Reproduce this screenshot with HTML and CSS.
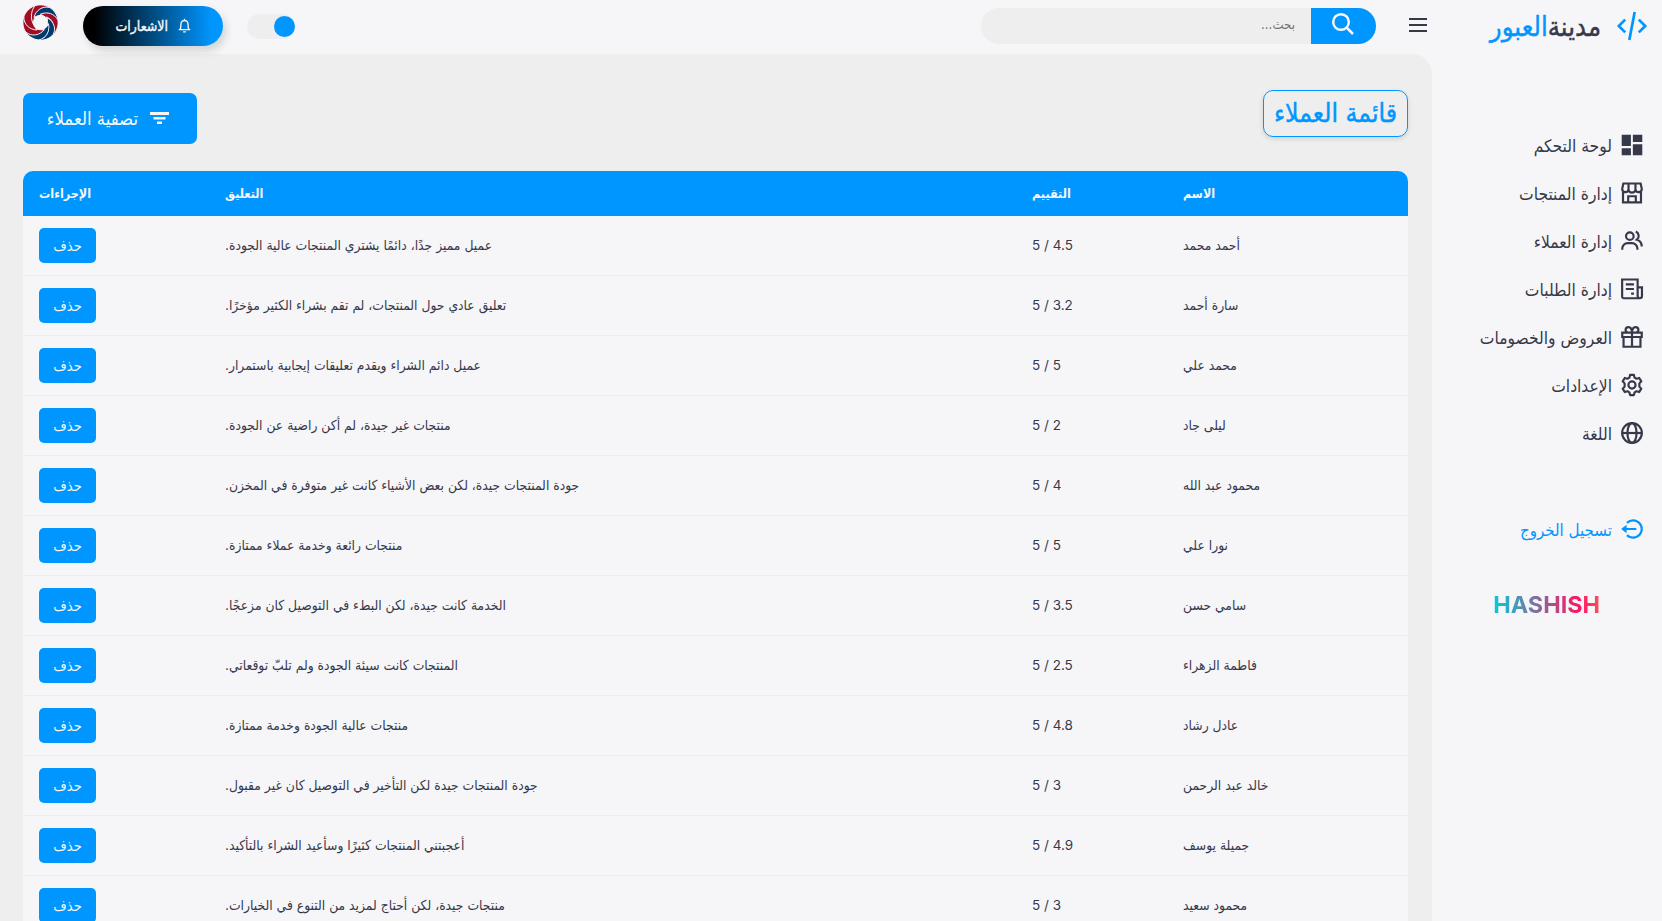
FILE: index.html
```
<!DOCTYPE html>
<html lang="ar" dir="rtl">
<head>
<meta charset="utf-8">
<title>قائمة العملاء</title>
<link rel="stylesheet" href="styles.css">
</head>
<body>
<aside class="sidebar">
  <div class="logo">
    <svg class="logo-icon" viewBox="0 0 24 24"><path d="M7.200 7.500 2.700 12l4.500 4.500M16.800 7.500l4.500 4.500-4.500 4.500M13.900 2.200l-3.800 19.600"/></svg>
    <div class="logo-name"><span>مدينة</span><span class="accent">العبور</span></div>
  </div>
  <nav class="menu">
    <a><svg class="solid" viewBox="0 0 24 24"><path d="M2.500 2.500h8.500V13h-8.500zM12.800 2.500H21.500v6.800h-8.700zM2.500 15h8.500v6.500h-8.500zM12.800 11.300H21.500V21.500h-8.700z"/></svg><span>لوحة التحكم</span></a>
    <a><svg viewBox="0 0 24 24"><path d="M3.700 11v9.700h16.600V11M8.500 20.500v-5.500h7v5.500M4 3.200h16l1 4.800a2.900 2.900 0 0 1-5.700 1 3.400 3.400 0 0 1-6.600 0A2.900 2.900 0 0 1 3 8zM8.800 3.200V9M15.200 3.200V9"/></svg><span>إدارة المنتجات</span></a>
    <a><svg viewBox="0 0 24 24"><circle cx="10" cy="7.500" r="3.500"/><path d="M3 20v-1a5 5 0 0 1 5-5h4a5 5 0 0 1 5 5v1M15.500 3.300a4.400 4.400 0 0 1 1 7.500c2.700.8 4.500 2.700 4.500 6.200"/></svg><span>إدارة العملاء</span></a>
    <a><svg viewBox="0 0 24 24"><path d="M19.300 20.500H4.200a1.300 1.300 0 0 1-1.300-1.300V3.200h14.300v15.300a2 2 0 0 0 2 2 2 2 0 0 0 2-2V10.500h-4M6.300 7.800h7.500M6.300 12h7.500M11.200 16.200h2.600"/></svg><span>إدارة الطلبات</span></a>
    <a><svg viewBox="0 0 24 24"><path d="M3 8h18v4H3zM4.200 12v9h15.600v-9M12 8v13M12 8H8.500C5 7.500 5.500 2.800 8.700 2.900 11 3 12 5.500 12 8c0-2.500 1-5 3.300-5.100 3.200-.1 3.700 4.600.2 5.100z"/></svg><span>العروض والخصومات</span></a>
    <a><svg viewBox="0 0 24 24"><circle cx="12" cy="12" r="3.300"/><path stroke-linejoin="round" d="M10.200 2.700h3.600l.6 2.500 1.800 1 2.500-.7 1.900 3.100-1.800 1.900v3l1.800 1.900-1.900 3.100-2.500-.7-1.800 1-.6 2.500h-3.600l-.6-2.500-1.800-1-2.500.7-1.900-3.100 1.800-1.900v-3L3.400 8.600l1.900-3.100 2.500.7 1.800-1z"/></svg><span>الإعدادات</span></a>
    <a><svg viewBox="0 0 24 24"><circle cx="12" cy="12" r="9.100"/><ellipse cx="12" cy="12" rx="4.200" ry="9.100"/><path d="M3 12h18"/></svg><span>اللغة</span></a>
  </nav>
  <a class="logout"><svg class="solid" viewBox="0 0 24 24"><path d="m2 12 5 4v-3h9v-2H7V8z"/><path d="M13 3a9 9 0 0 0-6.364 2.636L8.050 7.050A7 7 0 1 1 8.050 16.950l-1.414 1.414A9 9 0 1 0 13 3z"/></svg><span>تسجيل الخروج</span></a>
  <div class="brand">HASHISH</div>
</aside>

<div class="content">
  <header class="topbar">
    <svg class="burger" viewBox="0 0 18 14"><path d="M0 1h18M0 7h18M0 13h18"/></svg>
    <form class="search">
      <button type="button"><svg viewBox="0 0 24 24"><circle cx="10" cy="10" r="7.800"/><path d="m15.500 15.500 6.500 6.500"/></svg></button>
      <div class="field"><span>بحث...</span></div>
    </form>
    <div class="toggle"><i></i></div>
    <a class="notify"><svg viewBox="0 0 24 24"><path d="M2.800 18.500h18.400M5 18.500c1.200-2 1.300-4 1.300-8.500a5.700 6 0 0 1 11.400 0c0 4.500.1 6.500 1.300 8.500M9.800 22.200h4.400M12 1v3"/></svg><span>الاشعارات</span></a>
    <svg class="swirl" viewBox="-17.500 -17.500 35 35">
      <defs><path id="blade" d="M-8 2C-12.500-4-12-12-6-16.500-2-18.200 4-18.200 10-14.800 2-15-6-9-8 2z"/></defs>
      <use class="red" href="#blade"/>
      <use class="navy" href="#blade" transform="rotate(51.400)"/>
      <use class="red" href="#blade" transform="rotate(102.900)"/>
      <use class="navy" href="#blade" transform="rotate(154.300)"/>
      <use class="navy" href="#blade" transform="rotate(205.700)"/>
      <use class="red" href="#blade" transform="rotate(257.100)"/>
      <use class="red" href="#blade" transform="rotate(308.600)"/>
    </svg>
  </header>

  <main>
    <div class="heading">
      <h1>قائمة العملاء</h1>
      <a class="filter"><svg viewBox="0 0 19 12"><path d="M0 0h19v3H0zM3.500 5h12v2.500h-12zM7 9.500h5V12H7z"/></svg><span>تصفية العملاء</span></a>
    </div>
    <table>
      <colgroup><col class="c-name"><col class="c-rate"><col class="c-note"><col class="c-act"></colgroup>
      <thead><tr><th>الاسم</th><th>التقييم</th><th>التعليق</th><th>الإجراءات</th></tr></thead>
      <tbody>
        <tr><td>أحمد محمد</td><td class="rate">4.5 / 5</td><td>عميل مميز جدًا، دائمًا يشتري المنتجات عالية الجودة.</td><td><button>حذف</button></td></tr>
        <tr><td>سارة أحمد</td><td class="rate">3.2 / 5</td><td>تعليق عادي حول المنتجات، لم تقم بشراء الكثير مؤخرًا.</td><td><button>حذف</button></td></tr>
        <tr><td>محمد علي</td><td class="rate">5 / 5</td><td>عميل دائم الشراء ويقدم تعليقات إيجابية باستمرار.</td><td><button>حذف</button></td></tr>
        <tr><td>ليلى جاد</td><td class="rate">2 / 5</td><td>منتجات غير جيدة، لم أكن راضية عن الجودة.</td><td><button>حذف</button></td></tr>
        <tr><td>محمود عبد الله</td><td class="rate">4 / 5</td><td>جودة المنتجات جيدة، لكن بعض الأشياء كانت غير متوفرة في المخزن.</td><td><button>حذف</button></td></tr>
        <tr><td>نورا علي</td><td class="rate">5 / 5</td><td>منتجات رائعة وخدمة عملاء ممتازة.</td><td><button>حذف</button></td></tr>
        <tr><td>سامي حسن</td><td class="rate">3.5 / 5</td><td>الخدمة كانت جيدة، لكن البطء في التوصيل كان مزعجًا.</td><td><button>حذف</button></td></tr>
        <tr><td>فاطمة الزهراء</td><td class="rate">2.5 / 5</td><td>المنتجات كانت سيئة الجودة ولم تلبّ توقعاتي.</td><td><button>حذف</button></td></tr>
        <tr><td>عادل رشاد</td><td class="rate">4.8 / 5</td><td>منتجات عالية الجودة وخدمة ممتازة.</td><td><button>حذف</button></td></tr>
        <tr><td>خالد عبد الرحمن</td><td class="rate">3 / 5</td><td>جودة المنتجات جيدة لكن التأخير في التوصيل كان غير مقبول.</td><td><button>حذف</button></td></tr>
        <tr><td>جميلة يوسف</td><td class="rate">4.9 / 5</td><td>أعجبتني المنتجات كثيرًا وسأعيد الشراء بالتأكيد.</td><td><button>حذف</button></td></tr>
        <tr><td>محمود سعيد</td><td class="rate">3 / 5</td><td>منتجات جيدة، لكن أحتاج لمزيد من التنوع في الخيارات.</td><td><button>حذف</button></td></tr>
      </tbody>
    </table>
  </main>
</div>
</body>
</html>
```
FILE: styles.css
```
:root {
  --light: #f6f6f9;
  --grey: #eee;
  --dark: #363949;
  --blue: #0096ff;
}
* { box-sizing: border-box; margin: 0; padding: 0; }
body {
  display: flex;
  height: 100vh;
  overflow: hidden;
  background: var(--light);
  color: var(--dark);
  font: 13.750px "DejaVu Sans Condensed", "DejaVu Sans", sans-serif;
  white-space: nowrap;
}
svg { flex: none; display: block; fill: none; stroke: currentColor; stroke-width: 2; }
svg.solid { fill: currentColor; stroke: none; }

/* Sidebar */
.sidebar { flex: none; width: 230px; height: 100%; }
.logo { display: flex; align-items: center; height: 54px; padding-right: 13px; gap: 14px; }
.logo-icon { width: 34px; height: 34px; color: var(--blue); margin-top: -3px; stroke-width: 1.900; }
.logo-name { display: flex; font-size: 27.200px; line-height: 36px; margin-top: -1px; -webkit-text-stroke: .4px currentColor; }
.accent { color: var(--blue); }
.menu { padding-top: 67px; }
.menu a, .logout {
  display: flex;
  align-items: center;
  gap: 7px;
  height: 48px;
  padding-right: 17px;
  font-size: 17.300px;
}
.menu svg, .logout svg { width: 26px; height: 26px; margin-top: -1px; }
.menu span, .logout span { padding-top: 2px; }
.logout { margin-top: 48px; color: var(--blue); font-size: 16.800px; }
.brand {
  width: max-content;
  margin: 36px 62px 0 0;
  font: 700 23.400px/32px Inter, sans-serif;
  background: linear-gradient(90deg, #00cbd9, #ff1464 80%, #ff4d5c);
  -webkit-background-clip: text;
  background-clip: text;
  color: transparent;
}

/* Top bar */
.content { flex: 1; min-width: 0; }
.topbar { display: flex; align-items: center; height: 54px; padding: 0 5px 2px 23px; }
.burger { width: 18px; height: 14px; margin-top: -2px; }
.search { display: flex; width: 395px; height: 36px; margin-right: 33px; border-radius: 36px; overflow: hidden; background: var(--grey); }
.search button { width: 65px; border: 0; background: var(--blue); color: var(--light); display: flex; justify-content: center; padding: 4px 2px 0 0; }
.search svg { width: 24px; height: 24px; stroke-width: 2.500; }
.field { flex: 1; padding-right: 16px; line-height: 34px; color: #757575; font-size: 13.200px; }
.toggle { width: 48px; height: 25px; padding: 2px 0; margin-right: auto; border-radius: 25px; background: var(--grey); }
.toggle i { display: block; width: 21px; height: 21px; border-radius: 50%; background: var(--blue); }
.notify {
  display: flex;
  align-items: center;
  gap: 9px;
  width: 140px;
  height: 40px;
  margin: 0 24px 0 25px;
  padding-right: 31px;
  padding-bottom: 1px;
  border-radius: 40px;
  background: linear-gradient(90deg, #000 8%, var(--blue) 92%);
  box-shadow: 3px 5px 8px rgba(0, 0, 0, .14);
  color: var(--light);
  font-size: 14px;
  -webkit-text-stroke: .35px currentColor;
}
.notify svg { width: 15px; height: 15px; stroke-width: 2.200; }
.swirl { width: 35px; height: 35px; margin-top: -7px; stroke: var(--light); stroke-width: .9; }
.red { fill: #a20d25; }
.navy { fill: #003b70; }

/* Main area */
main { height: calc(100vh - 54px); padding: 36px 24px 0 23px; background: var(--grey); border-top-right-radius: 20px; overflow: hidden; }
.heading { display: flex; justify-content: space-between; height: 81px; }
h1 {
  width: 145px;
  height: 47px;
  border: 1px solid var(--blue);
  border-radius: 10px;
  color: var(--blue);
  box-shadow: 0 2px 5px rgba(0, 0, 0, .12);
  font-size: 26.300px;
  font-weight: 400;
  line-height: 45px;
  text-align: center;
  -webkit-text-stroke: .4px currentColor;
}
.filter {
  display: flex;
  align-items: center;
  gap: 12px;
  width: 174px;
  height: 51px;
  margin-top: 3px;
  padding-right: 28px;
  padding-bottom: 1px;
  border-radius: 7px;
  background: var(--blue);
  color: var(--light);
  font-size: 18.400px;
}
.filter svg { width: 19px; height: 12px; fill: currentColor; stroke: none; }
table { width: 1385px; table-layout: fixed; border-collapse: separate; border-spacing: 0; border-radius: 10px 10px 0 0; overflow: hidden; background: var(--light); }
.c-name { width: 241px; }
.c-rate { width: 151px; }
.c-note { width: 807px; }
.c-act { width: 186px; }
th { height: 45px; padding: 0 16px; background: var(--blue); color: var(--light); text-align: left; font-size: 12.500px; }
td { height: 60px; padding: 0 16px 2px; text-align: left; border-bottom: 1px solid var(--grey); }
td:last-child { padding-bottom: 0; }
.rate { font: 13.500px Inter, sans-serif; }
td button { display: inline-block; vertical-align: middle; width: 57px; height: 35px; border: 0; border-radius: 5px; background: var(--blue); color: var(--light); font: 14.500px "DejaVu Sans Condensed", sans-serif; }
```
